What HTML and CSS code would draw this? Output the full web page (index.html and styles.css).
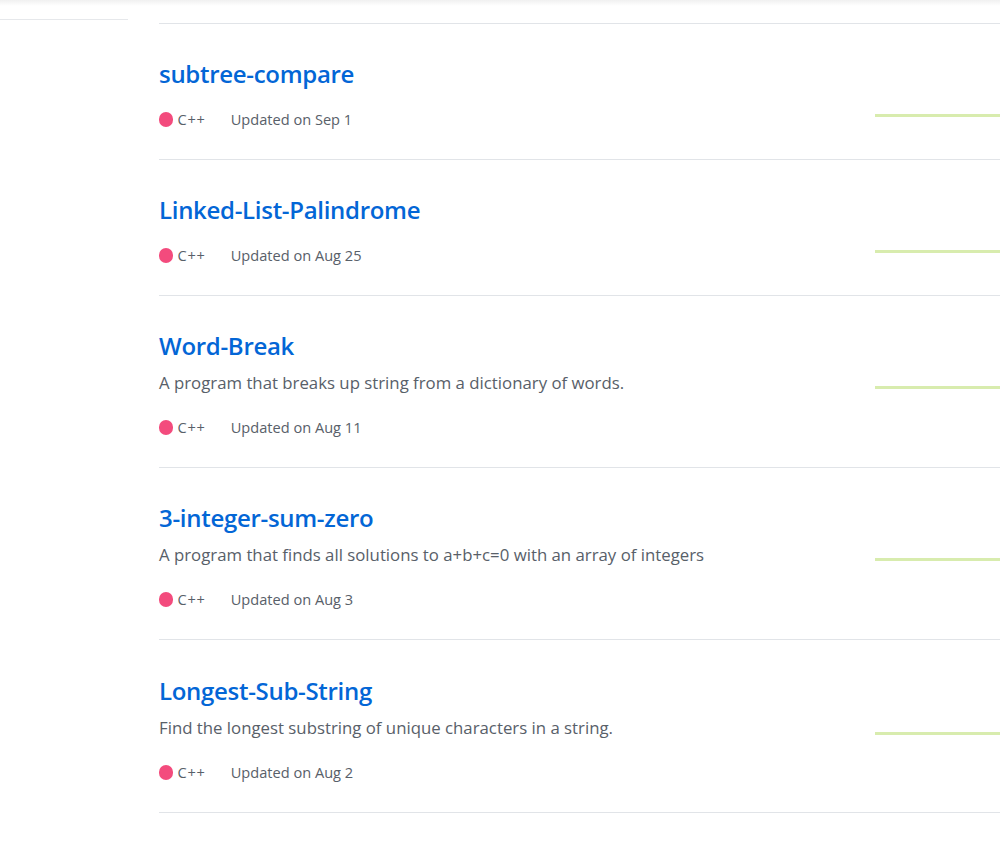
FILE: index.html
```html
<!DOCTYPE html>
<html>
<head>
<meta charset="utf-8">
<link rel="stylesheet" href="styles.css">
</head>
<body>
<div class="topshadow"></div>
<div class="layout">
  <aside class="sidebar"></aside>
  <main class="main">
    <ul class="repo-list">
      <li class="repo">
        <div class="info">
          <h3 class="title"><a href="#">subtree-compare</a></h3>
          <div class="meta"><span class="lang"><span class="dot"></span>C++</span><span>Updated on Sep 1</span></div>
        </div>
        <div class="graph"></div>
      </li>
      <li class="repo">
        <div class="info">
          <h3 class="title"><a href="#">Linked-List-Palindrome</a></h3>
          <div class="meta"><span class="lang"><span class="dot"></span>C++</span><span>Updated on Aug 25</span></div>
        </div>
        <div class="graph"></div>
      </li>
      <li class="repo">
        <div class="info">
          <h3 class="title"><a href="#">Word-Break</a></h3>
          <p class="desc">A program that breaks up string from a dictionary of words.</p>
          <div class="meta"><span class="lang"><span class="dot"></span>C++</span><span>Updated on Aug 11</span></div>
        </div>
        <div class="graph"></div>
      </li>
      <li class="repo">
        <div class="info">
          <h3 class="title"><a href="#">3-integer-sum-zero</a></h3>
          <p class="desc">A program that finds all solutions to a+b+c=0 with an array of integers</p>
          <div class="meta"><span class="lang"><span class="dot"></span>C++</span><span>Updated on Aug 3</span></div>
        </div>
        <div class="graph"></div>
      </li>
      <li class="repo last">
        <div class="info">
          <h3 class="title"><a href="#">Longest-Sub-String</a></h3>
          <p class="desc">Find the longest substring of unique characters in a string.</p>
          <div class="meta"><span class="lang"><span class="dot"></span>C++</span><span>Updated on Aug 2</span></div>
        </div>
        <div class="graph"></div>
      </li>
    </ul>
  </main>
</div>
</body>
</html>
```

FILE: styles.css
```css
html, body {
  margin: 0;
  padding: 0;
  background: #fff;
  overflow: hidden;
}
body {
  font-family: "Open Sans", "Noto Sans", sans-serif;
  color: #586069;
  width: 1000px;
  height: 846px;
  position: relative;
}
.topshadow {
  height: 6px;
  background: linear-gradient(to bottom, rgba(0,0,0,0.06), rgba(0,0,0,0));
}
.layout {
  display: flex;
  gap: 31px;
  margin-top: -6px;
}
.sidebar {
  width: 128px;
  height: 19px;
  border-bottom: 1px solid #e6e8eb;
  flex-shrink: 0;
}
.main {
  flex: 1;
  padding-top: 23px;
}
.repo-list {
  list-style: none;
  margin: 0;
  padding: 0;
  border-bottom: 1px solid #e1e4e8;
}
.repo {
  display: flex;
  border-top: 1px solid #e1e4e8;
  padding: 0;
}
.info {
  flex: 1;
  padding-top: 30px;
  padding-bottom: 29px;
}
.repo.last .info {
  padding-top: 31px;
}
.title {
  margin: 0;
  font-size: 24px;
  font-weight: 600;
  line-height: 40px;
  letter-spacing: -0.3px;
}
.title a {
  color: #0366d6;
  text-decoration: none;
}
.desc {
  margin: -1px 0 0;
  padding-bottom: 2px;
  font-size: 16.8px;
  line-height: 35px;
}
.meta {
  font-size: 14.6px;
  line-height: 21px;
  margin-top: 15px;
  display: flex;
  align-items: center;
}
.lang {
  display: inline-flex;
  align-items: center;
  margin-right: 25px;
  letter-spacing: 0.8px;
}
.dot {
  width: 14.4px;
  height: 14.4px;
  border-radius: 50%;
  background: #f34b7d;
  margin-right: 4px;
}
.graph {
  width: 125px;
  height: 3px;
  margin-top: 90px;
  background: #d8ecae;
  flex-shrink: 0;
}
.repo.last .graph {
  margin-top: 92px;
}
```
